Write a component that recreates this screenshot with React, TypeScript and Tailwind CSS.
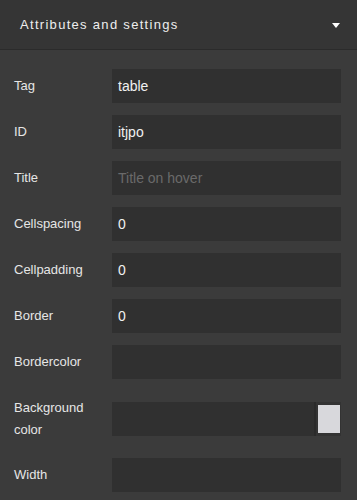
const traits = [
  { label: "Tag", value: "table" },
  { label: "ID", value: "itjpo" },
  { label: "Title", placeholder: "Title on hover" },
  { label: "Cellspacing", value: "0" },
  { label: "Cellpadding", value: "0" },
  { label: "Border", value: "0" },
  { label: "Bordercolor" },
];

function TraitRow({ label, value, placeholder }: { label: string; value?: string; placeholder?: string }) {
  return (
    <div className="flex h-[46px] items-center pl-[14px] pr-4">
      <div className="w-[98px] text-[13px] text-[#e6e6e6]">{label}</div>
      <div className="flex h-[34px] flex-1 items-center bg-[#303030] pl-[6px] text-[14px]">
        {value ? (
          <span className="text-[#f0f0f0]">{value}</span>
        ) : (
          <span className="text-[#6a6a6a]">{placeholder}</span>
        )}
      </div>
    </div>
  );
}

export default function App() {
  return (
    <div className="h-[500px] w-[357px] overflow-hidden bg-[#3b3b3b] font-['Liberation_Sans',Arial,sans-serif]">
      {/* Sector header */}
      <div className="flex h-[50px] items-center justify-between border-b border-[#2b2b2b] bg-[#353535] pl-5 pr-[17px]">
        <span className="text-[13px] tracking-[1.3px] text-[#eeeeee]">Attributes and settings</span>
        <svg width="8" height="5" viewBox="0 0 8 5" className="mt-[1px]">
          <polygon points="0,0 8,0 4,5" fill="#ffffff" />
        </svg>
      </div>

      <div className="pt-[13px]">
        {traits.map((t) => (
          <TraitRow key={t.label} {...t} />
        ))}

        {/* Color trait */}
        <div className="flex h-[67px] items-center pl-[14px] pr-4">
          <div className="w-[98px] text-[13px] leading-[22px] text-[#e6e6e6]">
            Background
            <br />
            color
          </div>
          <div className="flex h-[34px] flex-1 bg-[#303030]">
            <div className="flex-1" />
            <div className="flex w-[27px] items-center justify-center border-l-2 border-[#2a2a2a] bg-[#333333]">
              <div className="h-[28px] w-[22px] bg-[#d8d8dc]" />
            </div>
          </div>
        </div>

        <TraitRow label="Width" />
      </div>
    </div>
  );
}
